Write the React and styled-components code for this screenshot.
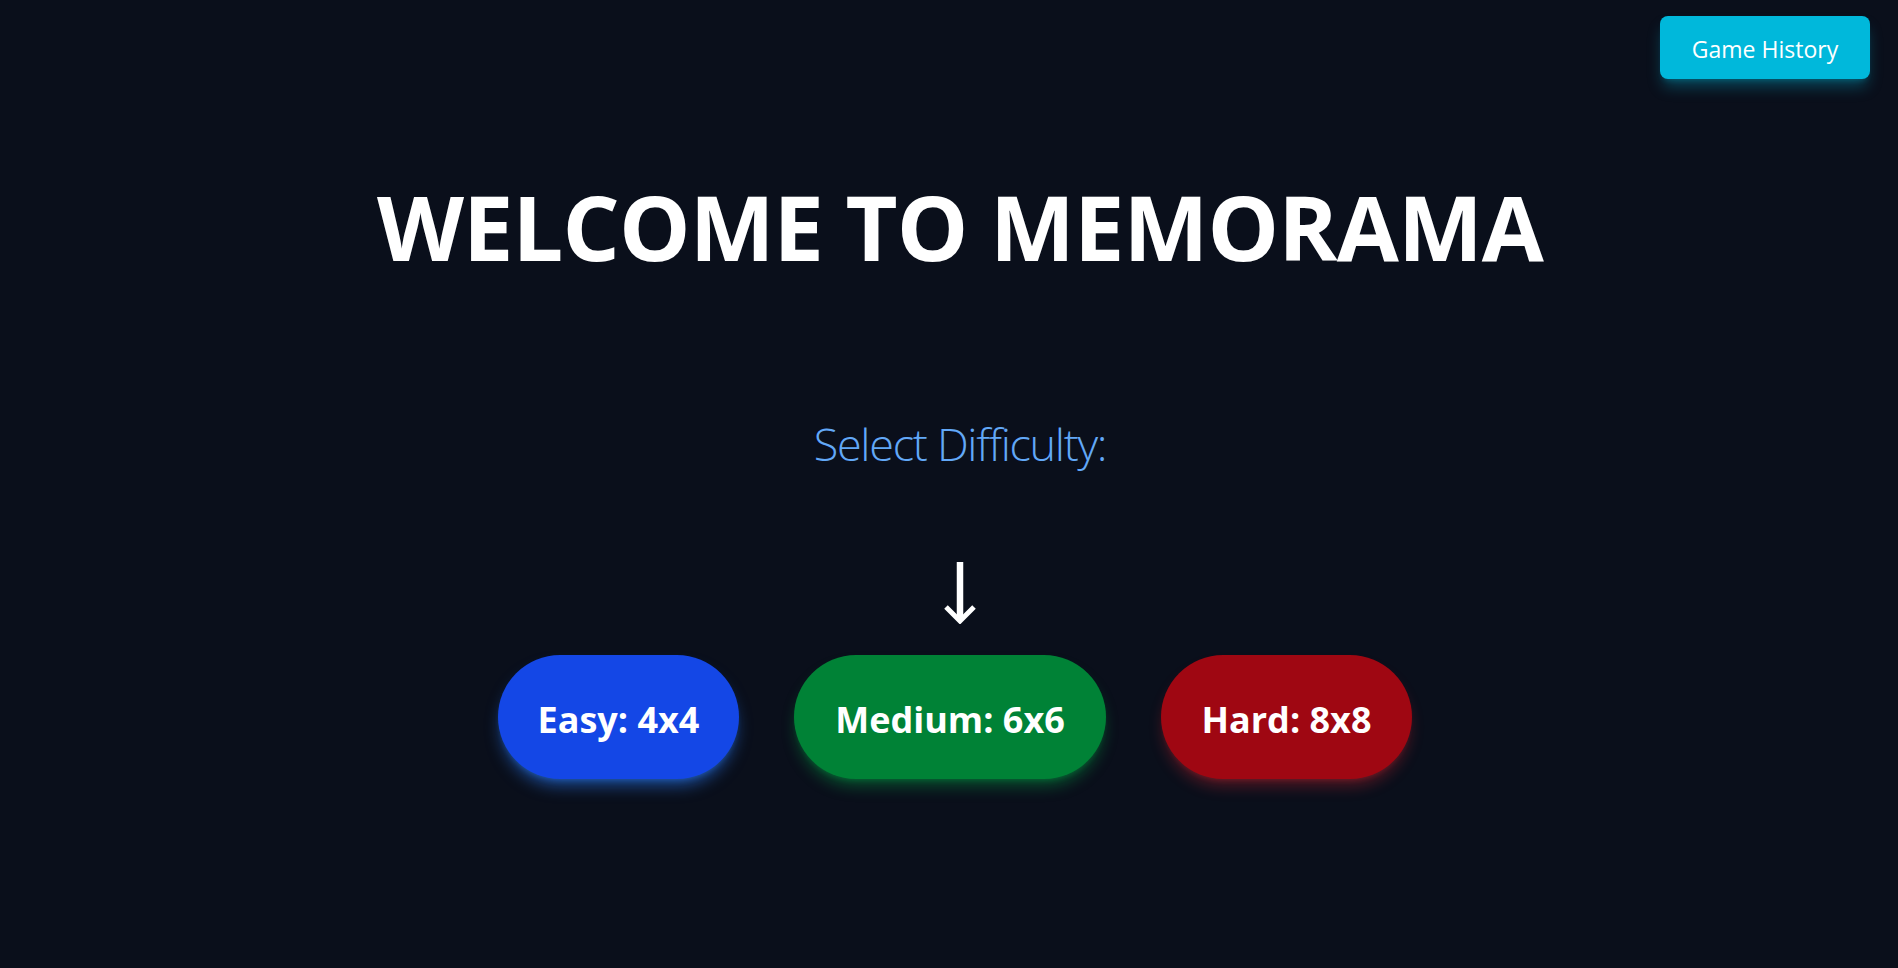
import React from "react";
import styled, { createGlobalStyle } from "styled-components";

const Global = createGlobalStyle`
  html, body { margin: 0; padding: 0; background: #0a0f1b; }
  body { font-family: "Open Sans", "Noto Sans", sans-serif; color: #fff; }
  * { box-sizing: border-box; }
`;

const Page = styled.div`
  min-height: 968px;
  background: #0a0f1b;
  display: flex;
  flex-direction: column;
`;

const TopBar = styled.header`
  display: flex;
  justify-content: flex-end;
  padding: 16px 28px 0 0;
`;

const HistoryButton = styled.button`
  font-family: "Open Sans", sans-serif;
  font-size: 23px;
  line-height: 32px;
  color: #fff;
  background: #00b8db;
  border: none;
  border-radius: 8px;
  width: 210px;
  height: 63px;
  padding: 2px 0 0;
  cursor: pointer;
  box-shadow: 0 10px 15px -3px rgba(0, 184, 219, 0.35), 0 4px 6px -4px rgba(0, 184, 219, 0.35);
`;

const Main = styled.main`
  display: flex;
  flex-direction: column;
  align-items: center;
  padding-left: 22px;
`;

const Title = styled.h1`
  margin: 102px 0 0;
  font-family: "Open Sans", sans-serif;
  font-weight: 700;
  font-size: 90px;
  letter-spacing: -0.9px;
  line-height: 1;
  white-space: nowrap;
`;

const Subtitle = styled.h2`
  margin: 150px 0 0;
  font-family: "Open Sans", sans-serif;
  font-weight: 300;
  font-size: 45px;
  letter-spacing: -1.3px;
  line-height: 1;
  color: #62a8f7;
`;

const Arrow = styled.svg`
  display: block;
  margin-top: 96px;
`;

const Row = styled.div`
  display: flex;
  gap: 55px;
  margin-top: 31px;
  padding-right: 10px;
`;

const Level = styled.button`
  font-family: "Open Sans", sans-serif;
  font-weight: 700;
  font-size: 36px;
  line-height: 1;
  color: #fff;
  background: ${(p) => p.$bg};
  border: none;
  border-radius: 62px;
  height: 124px;
  width: ${(p) => p.$w}px;
  padding: 6px 0 0;
  cursor: pointer;
  box-shadow: 0 10px 15px -3px ${(p) => p.$glow}, 0 4px 6px -4px ${(p) => p.$glow};
`;

const levels = [
  { label: "Easy: 4x4", bg: "#1447e6", glow: "rgba(43, 127, 255, 0.5)", w: 241 },
  { label: "Medium: 6x6", bg: "#008236", glow: "rgba(0, 201, 80, 0.35)", w: 312 },
  { label: "Hard: 8x8", bg: "#9f0712", glow: "rgba(251, 44, 54, 0.3)", w: 251 },
];

export default function App() {
  return (
    <Page>
      <Global />
      <TopBar>
        <HistoryButton>Game History</HistoryButton>
      </TopBar>
      <Main>
        <Title>WELCOME TO MEMORAMA</Title>
        <Subtitle>Select Difficulty:</Subtitle>
        <Arrow width="32" height="62" viewBox="0 0 32 62" aria-hidden="true">
          <path d="M16 0 V58" stroke="#fff" strokeWidth="6.5" fill="none" />
          <path d="M2 45 L16 59 L30 45" stroke="#fff" strokeWidth="5" fill="none" strokeLinejoin="miter" />
        </Arrow>
        <Row>
          {levels.map((l) => (
            <Level key={l.label} $bg={l.bg} $glow={l.glow} $w={l.w}>
              {l.label}
            </Level>
          ))}
        </Row>
      </Main>
    </Page>
  );
}
